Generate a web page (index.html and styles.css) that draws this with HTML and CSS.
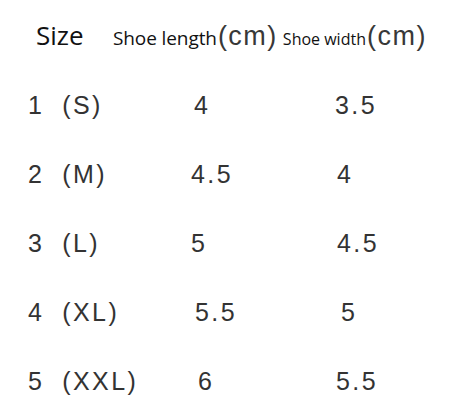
FILE: index.html
```html
<!DOCTYPE html>
<html lang="en">
<head>
<meta charset="utf-8">
<title>Size chart</title>
<link rel="stylesheet" href="styles.css">
</head>
<body>
<main class="chart">
  <div class="head">
    <span class="h-size">Size</span>
    <span class="h-col h-length">Shoe length<span class="unit">(cm)</span></span>
    <span class="h-col h-width">Shoe width<span class="unit">(cm)</span></span>
  </div>
  <div class="rows">
    <div class="row">
      <span class="label"><span>1</span><span>(S)</span></span>
      <span class="val n3">4</span>
      <span class="val">3.5</span>
    </div>
    <div class="row">
      <span class="label"><span>2</span><span>(M)</span></span>
      <span class="val">4.5</span>
      <span class="val n2">4</span>
    </div>
    <div class="row">
      <span class="label"><span>3</span><span>(L)</span></span>
      <span class="val">5</span>
      <span class="val n2">4.5</span>
    </div>
    <div class="row">
      <span class="label"><span>4</span><span>(XL)</span></span>
      <span class="val n4">5.5</span>
      <span class="val n6">5</span>
    </div>
    <div class="row">
      <span class="label"><span>5</span><span>(XXL)</span></span>
      <span class="val n7">6</span>
      <span class="val n1">5.5</span>
    </div>
  </div>
</main>
</body>
</html>
```

FILE: styles.css
```css
html, body {
  margin: 0;
  padding: 0;
  background: #ffffff;
}

.chart {
  width: 462px;
  height: 417px;
  color: #333333;
}

.head {
  display: flex;
  align-items: baseline;
  height: 71px;
  box-sizing: border-box;
  padding-top: 22px;
  padding-left: 36px;
  white-space: nowrap;
}

.h-size {
  font-family: "Open Sans", "Noto Sans", sans-serif;
  font-size: 26px;
  line-height: 1;
  color: #111111;
  width: 77px;
}

.h-col {
  font-family: "Open Sans", "Noto Sans", sans-serif;
  line-height: 1;
  color: #111111;
}

.h-length {
  font-size: 19px;
  letter-spacing: -0.1px;
  margin-right: 5px;
}

.h-width {
  font-size: 16px;
  letter-spacing: 0;
}

.unit {
  font-family: "Liberation Sans", Arial, sans-serif;
  font-size: 27px;
  letter-spacing: 1.5px;
  color: #383838;
  margin-left: 1px;
}

.rows {
  display: flex;
  flex-direction: column;
}

.row {
  display: grid;
  grid-template-columns: 163px 144px 1fr;
  padding-left: 28px;
  height: 69px;
  line-height: 69px;
  font-family: "Liberation Sans", Arial, sans-serif;
  font-size: 25px;
  letter-spacing: 2.4px;
  color: #333333;
}

.label {
  display: flex;
  gap: 18px;
}

.val.n1 { padding-left: 1px; }
.val.n2 { padding-left: 2px; }
.val.n3 { padding-left: 3px; }
.val.n4 { padding-left: 4px; }
.val.n6 { padding-left: 6px; }
.val.n7 { padding-left: 7px; }
```
